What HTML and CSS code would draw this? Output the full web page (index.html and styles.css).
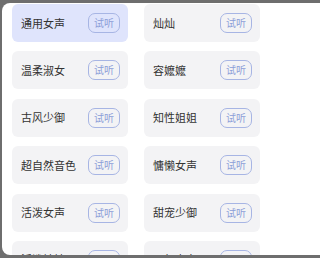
FILE: index.html
```html
<!DOCTYPE html>
<html lang="zh">
<head>
<meta charset="utf-8">
<link rel="stylesheet" href="styles.css">
</head>
<body>
<div class="panel">
  <div class="grid">
    <div class="card active"><span class="name">通用女声</span><span class="listen">试听</span></div>
    <div class="card"><span class="name">灿灿</span><span class="listen">试听</span></div>
    <div class="card"><span class="name">温柔淑女</span><span class="listen">试听</span></div>
    <div class="card"><span class="name">容嬷嬷</span><span class="listen">试听</span></div>
    <div class="card"><span class="name">古风少御</span><span class="listen">试听</span></div>
    <div class="card"><span class="name">知性姐姐</span><span class="listen">试听</span></div>
    <div class="card"><span class="name">超自然音色</span><span class="listen">试听</span></div>
    <div class="card"><span class="name">慵懒女声</span><span class="listen">试听</span></div>
    <div class="card"><span class="name">活泼女声</span><span class="listen">试听</span></div>
    <div class="card"><span class="name">甜宠少御</span><span class="listen">试听</span></div>
    <div class="card"><span class="name">活泼妹妹</span><span class="listen">试听</span></div>
    <div class="card"><span class="name">元气少女</span><span class="listen">试听</span></div>
  </div>
</div>
</body>
</html>
```
FILE: styles.css
```css
html, body {
  margin: 0;
  padding: 0;
}
body {
  height: 258px;
  background: #6e6e6e;
  overflow: hidden;
  font-family: "Noto Sans CJK SC", "Noto Sans", sans-serif;
}
.panel {
  margin: 3px 0 0 2px;
  height: 252px;
  background: #ffffff;
  border-radius: 8px 0 0 8px;
  overflow: hidden;
  box-sizing: border-box;
  padding: 1px 0 0 10px;
}
.grid {
  display: grid;
  grid-template-columns: 116px 116px;
  column-gap: 16px;
  row-gap: 9.4px;
}
.card {
  height: 38px;
  box-sizing: border-box;
  background: #f3f3f5;
  border-radius: 6px;
  display: flex;
  align-items: center;
  justify-content: space-between;
  padding: 0 8px 0 9px;
}
.card.active {
  background: #dfe4fc;
}
.name {
  font-size: 11px;
  color: #333333;
  white-space: nowrap;
  line-height: 1;
}
.listen {
  width: 32px;
  height: 20px;
  box-sizing: border-box;
  border: 1px solid #a7b5e4;
  border-radius: 7px;
  color: #8d9ed8;
  font-size: 10px;
  display: flex;
  align-items: center;
  justify-content: center;
  line-height: 1;
  flex-shrink: 0;
}
```
